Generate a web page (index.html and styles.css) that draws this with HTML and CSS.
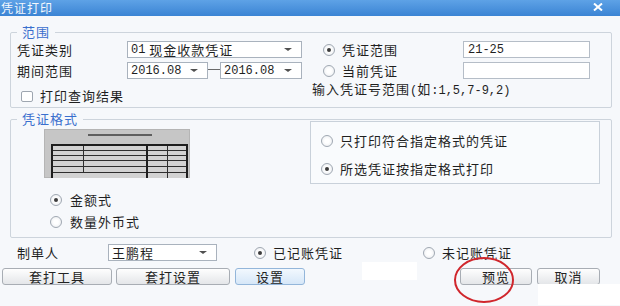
FILE: index.html
```html
<!DOCTYPE html>
<html lang="zh">
<head>
<meta charset="utf-8">
<title>凭证打印</title>
<link rel="stylesheet" href="styles.css">
</head>
<body>
<div class="titlebar">
  <span class="title">凭证打印</span>
  <svg class="close" width="10" height="8" viewBox="0 0 10 8"><path d="M1 0.5 L9 7.5 M9 0.5 L1 7.5" stroke="#fff" stroke-width="2"/></svg>
</div>
<div class="content">
  <fieldset class="group range-group">
    <legend>范围</legend>
    <div class="range">
      <div class="col">
        <div class="row">
          <span class="lbl">凭证类别</span>
          <div class="select w175"><span class="mono">01</span>&nbsp;现金收款凭证<i class="arrow"></i></div>
        </div>
        <div class="row">
          <span class="lbl">期间范围</span>
          <div class="select w81"><span class="mono">2016.08</span><i class="arrow"></i></div>
          <span class="dash"></span>
          <div class="select w82"><span class="mono">2016.08</span><i class="arrow"></i></div>
        </div>
        <div class="check-row"><span class="checkbox"></span><span>打印查询结果</span></div>
      </div>
      <div class="col">
        <div class="row">
          <span class="radio on r-range"></span><span class="rlabel">凭证范围</span>
          <div class="input"><span class="mono">21-25</span></div>
        </div>
        <div class="row">
          <span class="radio r-range"></span><span class="rlabel">当前凭证</span>
          <div class="input"></div>
        </div>
        <div class="hint">输入凭证号范围<span class="mono">(</span>如<span class="mono">:1,5,7-9,2)</span></div>
      </div>
    </div>
  </fieldset>

  <fieldset class="group format-group">
    <legend>凭证格式</legend>
    <div class="format">
      <div class="col">
        <svg class="thumb" width="146" height="49" viewBox="0 0 146 49">
          <rect x="0" y="0" width="146" height="49" fill="#c6c6c6"/>
          <rect x="0.5" y="0.5" width="145" height="48" fill="none" stroke="#b5b5b5"/>
          <rect x="8" y="16" width="135" height="33" fill="#d2d2d2"/>
          <line x1="44" y1="6" x2="108" y2="6" stroke="#3c3c3c" stroke-width="1.5"/>
          <g stroke="#2e2e2e" stroke-width="1">
            <line x1="8" y1="21.5" x2="143" y2="21.5"/>
            <line x1="8" y1="26.5" x2="143" y2="26.5"/>
            <line x1="8" y1="31.5" x2="143" y2="31.5"/>
            <line x1="8" y1="37.5" x2="143" y2="37.5"/>
            <line x1="8" y1="43.5" x2="143" y2="43.5"/>
            <line x1="39.5" y1="16" x2="39.5" y2="43.5"/>
            <line x1="123.5" y1="16" x2="123.5" y2="49"/>
          </g>
          <g stroke="#1e1e1e" stroke-width="2">
            <line x1="7" y1="16" x2="144" y2="16"/>
            <line x1="8" y1="16" x2="8" y2="49"/>
            <line x1="143" y1="16" x2="143" y2="49"/>
            <line x1="103" y1="16" x2="103" y2="49"/>
          </g>
        </svg>
        <div class="rrow r-amount"><span class="radio on"></span><span>金额式</span></div>
        <div class="rrow r-qty"><span class="radio"></span><span>数量外币式</span></div>
      </div>
      <div class="col">
        <div class="inner-box">
          <div class="rrow"><span class="radio"></span><span>只打印符合指定格式的凭证</span></div>
          <div class="rrow r-second"><span class="radio on"></span><span>所选凭证按指定格式打印</span></div>
        </div>
      </div>
    </div>
  </fieldset>

  <div class="maker-row">
    <span class="lbl-maker">制单人</span>
    <div class="select w109"><span>王鹏程</span><i class="arrow"></i></div>
    <span class="radio on r-posted"></span><span class="rtext">已记账凭证</span>
    <span class="radio r-unposted"></span><span class="rtext">未记账凭证</span>
  </div>

  <div class="buttons">
    <button class="btn w110">套打工具</button>
    <button class="btn w114 ml4">套打设置</button>
    <button class="btn w70 ml5 btn-focus">设置</button>
    <button class="btn w72 ml155">预览</button>
    <button class="btn w63 ml5">取消</button>
  </div>
</div>

<div class="patch patch-a"></div>
<div class="patch patch-b"></div>
<svg class="mark" width="62" height="48" viewBox="0 0 62 48"><ellipse cx="31" cy="24" rx="29" ry="22" fill="none" stroke="#d0262c" stroke-width="2"/></svg>
</body>
</html>
```

FILE: styles.css
```css
* { box-sizing: border-box; }
html, body { margin: 0; padding: 0; }
body {
  width: 620px;
  height: 306px;
  overflow: hidden;
  position: relative;
  background: #f6f8fb;
  font-family: "Noto Sans CJK SC", "Noto Sans", sans-serif;
  font-size: 13px;
  line-height: 16px;
  letter-spacing: 1px;
  color: #1f1f1f;
}
.mono {
  font-family: "Liberation Mono", "DejaVu Sans Mono", monospace;
  font-size: 12px;
  letter-spacing: 0;
}
.titlebar {
  height: 16px;
  background: linear-gradient(#5ea2e6, #3b84d4);
  display: flex;
  align-items: center;
  justify-content: space-between;
  color: #f4f8fd;
}
.title { font-size: 12px; line-height: 16px; margin-left: 1px; }
.close { margin: -3px 17px 0 0; }

.content { padding-top: 8px; }

.group {
  margin: 0 0 0 10px;
  width: 602px;
  min-width: 0;
  padding: 0 6px;
  border: 1px solid #cdd4dc;
  border-radius: 2px;
}
.group legend {
  padding: 0 5px;
  margin: 0;
  color: #3a6fce;
  line-height: 16px;
}

/* Range group */
.range {
  display: grid;
  grid-template-columns: 295px 1fr;
  padding: 1px 0 3px;
}
.row {
  display: flex;
  align-items: center;
  height: 17px;
}
.row + .row { margin-top: 4px; }
.lbl { width: 110px; flex: none; }
.select {
  height: 17px;
  border: 1px solid #a9b2bd;
  background: #fff;
  display: flex;
  align-items: center;
  padding-left: 3px;
  flex: none;
  white-space: nowrap;
}
.w175 { width: 175px; }
.w81 { width: 81px; }
.w82 { width: 82px; }
.w109 { width: 109px; }
.arrow {
  margin-left: auto;
  margin-right: 9px;
  width: 0;
  height: 0;
  border-left: 4px solid transparent;
  border-right: 4px solid transparent;
  border-top: 3px solid #505050;
}
.dash {
  width: 12px;
  height: 1px;
  background: #6a6a6a;
  margin-top: -2px;
  flex: none;
}
.check-row {
  display: flex;
  align-items: center;
  height: 16px;
  margin-top: 9px;
  padding-left: 4px;
}
.checkbox {
  width: 12px;
  height: 11px;
  border: 1px solid #9ea6b0;
  border-radius: 2px;
  background: #fff;
  margin-right: 7px;
  flex: none;
}
.radio {
  width: 12px;
  height: 12px;
  border-radius: 50%;
  border: 1px solid #a0a8b2;
  background: radial-gradient(circle, #ffffff 30%, #e6e9ed 100%);
  position: relative;
  flex: none;
}
.radio.on::after {
  content: "";
  position: absolute;
  left: 3px;
  top: 3px;
  width: 4px;
  height: 4px;
  border-radius: 50%;
  background: #3c3c3c;
}
.r-range { margin-left: 11px; margin-right: 7px; }
.rlabel { width: 121px; flex: none; }
.input {
  width: 127px;
  height: 17px;
  border: 1px solid #b5bdc7;
  background: #fff;
  display: flex;
  align-items: center;
  padding-left: 4px;
}
.hint { margin-top: 2px; height: 16px; white-space: nowrap; }

/* Format group */
.format-group { margin-top: 3px; }
.format {
  display: grid;
  grid-template-columns: 293px 1fr;
  padding-bottom: 7px;
}
.thumb { display: block; margin: 2px 0 0 27px; }
.rrow {
  display: flex;
  align-items: center;
  height: 16px;
  gap: 7px;
}
.r-amount { margin: 14px 0 0 33px; gap: 8px; }
.r-qty { margin: 6px 0 0 33px; gap: 8px; }
.inner-box {
  margin-top: -6px;
  width: 290px;
  height: 63px;
  border: 1px solid #c9d1da;
  background: #f9fbfd;
  padding: 11px 0 0 10px;
}
.r-second { margin-top: 12px; }

/* Maker row */
.maker-row {
  display: flex;
  align-items: center;
  height: 17px;
  margin-top: 6px;
  padding-left: 17px;
}
.lbl-maker { width: 91px; flex: none; }
.r-posted { margin-left: 37px; margin-right: 7px; }
.r-unposted { margin-left: 80px; margin-right: 7px; }

/* Buttons */
.buttons {
  display: flex;
  margin-top: 7px;
  padding-left: 2px;
}
.btn {
  height: 17px;
  padding: 0;
  border: 1px solid #a8adb4;
  border-radius: 3px;
  background: linear-gradient(#fefefe, #e4e6e9);
  font: inherit;
  font-size: 13px;
  line-height: 15px;
  letter-spacing: 1px;
  color: #222;
  text-align: center;
}
.btn-focus {
  border-color: #93b6da;
  background: linear-gradient(#f2f8fe, #d6e7f8);
}
.w110 { width: 110px; }
.w114 { width: 114px; }
.w70 { width: 70px; }
.w72 { width: 72px; }
.w63 { width: 63px; }
.ml4 { margin-left: 4px; }
.ml5 { margin-left: 5px; }
.ml155 { margin-left: 155px; }

/* overlays */
.patch { position: absolute; background: #fff; }
.patch-a { left: 362px; top: 262px; width: 55px; height: 18px; }
.patch-b { left: 538px; top: 284px; width: 82px; height: 21px; }
.mark { position: absolute; left: 453px; top: 256px; }
```
